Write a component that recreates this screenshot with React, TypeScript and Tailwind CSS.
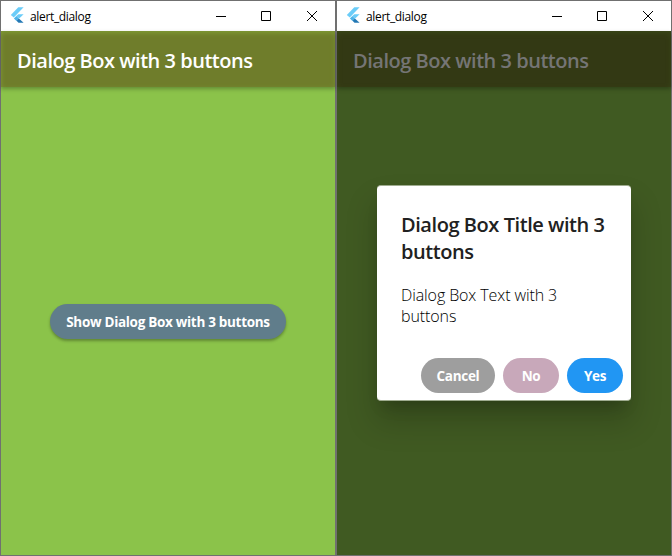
import type { ReactNode } from "react";

const FONT = "font-['Segoe_UI','Open_Sans',sans-serif]";

function FlutterLogo() {
  return (
    <svg width="16" height="16" viewBox="0 0 16 16" className="mb-[2px] block shrink-0">
      <path d="M9.3 0.2H14.6L4.8 10.6L1.8 8Z" fill="#6accf8" />
      <path d="M9.3 7.2H14.6L10.2 11.5L7.3 9.1Z" fill="#6accf8" />
      <path d="M4.9 11.5L7.4 9L10 11.5L7.5 14Z" fill="#4cb4ea" />
      <path d="M7.5 13.8L9.9 11.4L14.6 15.8H9.5Z" fill="#2478b4" />
    </svg>
  );
}

function TitleBar() {
  return (
    <div className="flex h-[30px] shrink-0 items-center bg-white pl-2">
      <FlutterLogo />
      <span className="ml-[5px] mt-px whitespace-nowrap text-[12px] leading-[16px] tracking-[-0.34px] text-black">
        alert_dialog
      </span>
      <svg
        width="102"
        height="12"
        viewBox="0 0 102 12"
        className="mb-[2px] ml-auto mr-[17px] block"
        fill="none"
        stroke="#000"
        strokeWidth="1"
      >
        <path d="M0 7.5H10" />
        <path d="M45.5 2.5H54.5V11.5H45.5Z" />
        <path d="M91 2L101 12M101 2L91 12" />
      </svg>
    </div>
  );
}

function AppWindow({ dimmed = false, children }: { dimmed?: boolean; children: ReactNode }) {
  return (
    <div className="flex h-[556px] w-[336px] shrink-0 flex-col border border-[#707070]">
      <TitleBar />
      <div className={`flex flex-1 flex-col ${dimmed ? "bg-[#405a22]" : "bg-[#8bc34a]"}`}>
        <div
          className={`flex h-14 shrink-0 items-center pl-4 pt-[2px] ${
            dimmed
              ? "bg-[#333914] text-[#757575] shadow-[inset_0_2px_5px_#3a4718,0_2px_4px_rgba(0,0,0,0.28)]"
              : "bg-[#6f7d2b] text-white shadow-[inset_0_2px_5px_#7f9a35,0_2px_4px_rgba(0,0,0,0.28)]"
          }`}
        >
          <h1 className="whitespace-nowrap text-[20px] font-semibold leading-[27px] tracking-[-0.48px]">
            Dialog Box with 3 buttons
          </h1>
        </div>
        {children}
      </div>
    </div>
  );
}

export default function App() {
  return (
    <div className={`flex h-[556px] w-[672px] overflow-hidden ${FONT}`}>
      <AppWindow>
        <div className="flex flex-1 items-start justify-center pt-[216.5px]">
          <button className="h-[35px] w-[236px] whitespace-nowrap rounded-full bg-[#607d8b] pt-[2px] text-[13.5px] font-bold leading-[19px] tracking-[-0.3px] text-white shadow-[0_2px_3px_rgba(0,0,0,0.3)]">
            Show Dialog Box with 3 buttons
          </button>
        </div>
      </AppWindow>
      <AppWindow dimmed>
        <div className="flex flex-1 items-start justify-center pt-[98px]">
          <div
            role="dialog"
            className="flex h-[216px] w-[254px] flex-col rounded border-y border-[#9fac90] bg-white shadow-[0_11px_15px_-7px_rgba(0,0,0,0.2),0_20px_30px_3px_rgba(0,0,0,0.16)]"
          >
            <h2 className="whitespace-nowrap pl-6 pt-[25px] text-[20px] font-semibold leading-[27px] tracking-[-0.44px] text-[#212121]">
              Dialog Box Title with 3
              <br />
              buttons
            </h2>
            <p className="whitespace-nowrap pl-6 pt-5 text-[16px] font-light leading-[21px] tracking-[-0.1px] text-black">
              Dialog Box Text with 3
              <br />
              buttons
            </p>
            <div className="mb-[7.5px] mt-auto flex justify-end gap-2 pr-2 text-[13.5px] font-bold leading-[19px] tracking-[-0.3px] text-white">
              <button className="h-[35px] w-[74px] rounded-full bg-[#9e9e9e] pt-[2px]">Cancel</button>
              <button className="h-[35px] w-14 rounded-full bg-[#c8a8ba] pt-[2px]">No</button>
              <button className="h-[35px] w-14 rounded-full bg-[#2196f3] pt-[2px]">Yes</button>
            </div>
          </div>
        </div>
      </AppWindow>
    </div>
  );
}
